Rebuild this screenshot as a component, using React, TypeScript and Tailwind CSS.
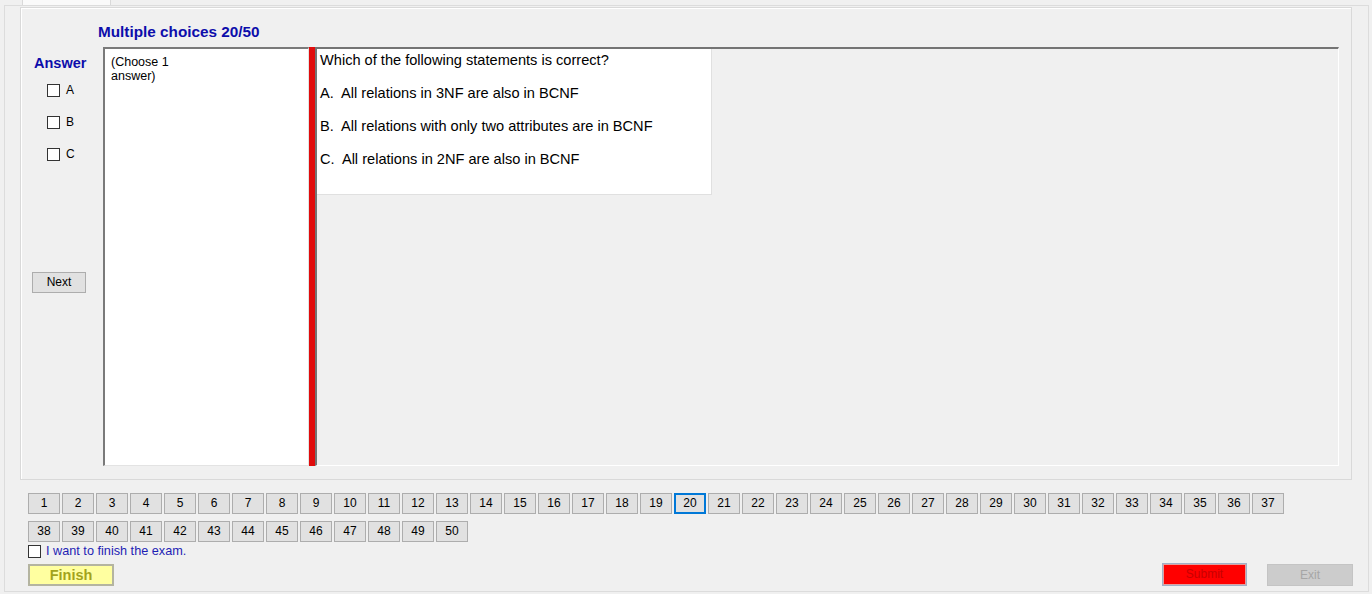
const numbers = Array.from({ length: 50 }, (_, i) => i + 1);
const options = ['A', 'B', 'C'];

function Box() {
  return <span className="block h-[13px] w-[13px] shrink-0 border border-[#333333] bg-white" />;
}

export default function App() {
  return (
    <div className="h-[594px] w-[1372px] overflow-hidden bg-[#f0f0f0] font-['Liberation_Sans',Arial,sans-serif] text-black">
      {/* Tab header */}
      <div className="flex h-[5px]">
        <div className="ml-[22px] w-[89px] border-x border-[#d9d9d9] bg-[#fafafa]" />
      </div>

      {/* Tab page */}
      <div className="ml-[4px] h-[587px] w-[1365px] border border-[#dcdcdc]">
        {/* Group box */}
        <div className="ml-[15px] mt-[1px] h-[473px] w-[1332px] border border-[#d9d9d9] shadow-[inset_1px_1px_0_#ffffff]">
          <div className="ml-[77px] pt-[15px] text-[15.3px] font-bold leading-[17px] text-[#0d0dab]">
            Multiple choices 20/50
          </div>

          <div className="mt-[7px] flex h-[419px]">
            {/* Answer column */}
            <div className="flex w-[82px] flex-col">
              <div className="ml-[13px] mt-[8px] text-[14.5px] font-bold leading-[16px] text-[#0d0dab]">Answer</div>
              <div className="ml-[26px] mt-[13px] flex flex-col gap-[19px]">
                {options.map((o) => (
                  <div key={o} className="flex h-[13px] items-center gap-[6px] text-[12px] leading-[13px]">
                    <Box />
                    <span>{o}</span>
                  </div>
                ))}
              </div>
              <button className="ml-[11px] mt-[111px] h-[21px] w-[54px] border border-[#adadad] bg-[#e1e1e1] text-[12px] leading-[19px]">
                Next
              </button>
            </div>

            {/* Hint box */}
            <div className="w-[206px] border-b border-l-2 border-r border-t-2 border-b-[#e3e3e3] border-l-[#7a7a7a] border-r-[#e3e3e3] border-t-[#7a7a7a] bg-white pl-[6px] pt-[6px] text-[12.5px] leading-[14px]">
              (Choose 1
              <br />
              answer)
            </div>

            {/* Red marker */}
            <div className="w-[6px] bg-[#e00c0c]" />

            {/* Question panel */}
            <div className="w-[1024px] border-b border-l-2 border-r border-t-2 border-b-white border-l-[#747474] border-r-white border-t-[#747474]">
              <div className="flex h-[146px] w-[395px] flex-col gap-[17px] border-b border-r border-[#e0e0e0] bg-white pl-[3px] pt-[3px] text-[14.6px] leading-[16px]">
                <div>Which of the following statements is correct?</div>
                <div className="whitespace-pre">A.  All relations in 3NF are also in BCNF</div>
                <div className="whitespace-pre">B.  All relations with only two attributes are in BCNF</div>
                <div className="whitespace-pre">C.  All relations in 2NF are also in BCNF</div>
              </div>
            </div>
          </div>
        </div>

        {/* Question navigator */}
        <div className="ml-[23px] mt-[13px] flex w-[1258px] flex-wrap gap-x-[2px] gap-y-[7px]">
          {numbers.map((n) => (
            <button
              key={n}
              className={`h-[21px] w-[32px] bg-[#e1e1e1] text-[12px] leading-[17px] ${
                n === 20 ? 'border-2 border-[#0078d7]' : 'border border-[#adadad]'
              }`}
            >
              {n}
            </button>
          ))}
        </div>

        <div className="ml-[23px] mt-[3px] flex h-[13px] items-center gap-[5px]">
          <Box />
          <span className="text-[12.7px] leading-[13px] text-[#1e1eb4]">I want to finish the exam.</span>
        </div>

        <div className="ml-[23px] mt-[5px] flex w-[1325px] items-center">
          <button className="h-[22px] w-[86px] border-2 border-[#b4b4a0] bg-[#ffffa0] text-[14.5px] font-bold leading-[18px] text-[#a3a31c]">
            Finish
          </button>
          <button className="ml-auto h-[23px] w-[85px] border border-[#9fb0c8] bg-[#ff0000] text-[12px] leading-[21px] text-[#c80000] shadow-[inset_0_0_0_1px_#e0a0a0]">
            Submit
          </button>
          <button className="ml-[20px] h-[22px] w-[86px] border border-[#c4c4c4] bg-[#cccccc] text-[12px] leading-[20px] text-[#a6a6a6]">
            Exit
          </button>
        </div>
      </div>
    </div>
  );
}
